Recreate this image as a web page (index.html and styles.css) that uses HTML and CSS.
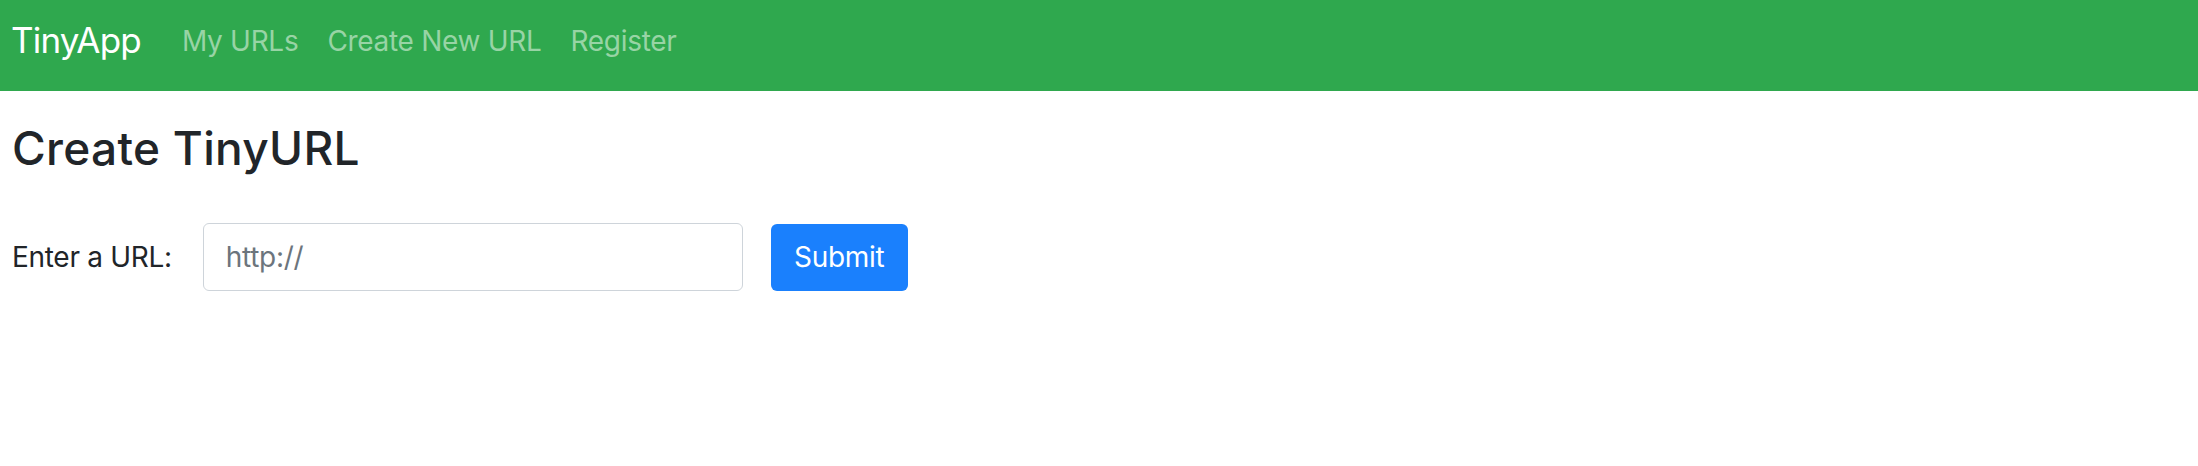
FILE: index.html
```html
<!DOCTYPE html>
<html lang="en">
<head>
<meta charset="utf-8">
<title>TinyApp</title>
<link rel="stylesheet" href="styles.css">
</head>
<body>
<nav class="navbar">
  <a class="brand" href="#">TinyApp</a>
  <ul class="nav-links">
    <li><a href="#">My URLs</a></li>
    <li><a href="#">Create New URL</a></li>
    <li><a href="#">Register</a></li>
  </ul>
</nav>
<main class="content">
  <h1 class="title">Create TinyURL</h1>
  <form class="url-form">
    <label class="url-label" for="longURL">Enter a URL:</label>
    <input class="url-input" id="longURL" type="text" placeholder="http://">
    <button class="btn-submit" type="submit">Submit</button>
  </form>
</main>
</body>
</html>
```

FILE: styles.css
```css
* { box-sizing: border-box; }
html, body { margin: 0; padding: 0; background: #ffffff; }
body {
  font-family: Inter, "Noto Sans", "Liberation Sans", sans-serif;
  color: #212529;
}
.navbar {
  height: 91px;
  background: #2fa84e;
  display: flex;
  align-items: flex-start;
  padding: 23px 11px 0 11px;
}
.brand {
  font-size: 35px;
  line-height: 35px;
  color: #ffffff;
  text-decoration: none;
  letter-spacing: -0.8px;
}
.nav-links {
  list-style: none;
  margin: 4px 0 0 41px;
  padding: 0;
  display: flex;
  gap: 29px;
}
.nav-links a {
  font-size: 28px;
  line-height: 28px;
  color: #98d4a5;
  text-decoration: none;
  letter-spacing: -0.3px;
  display: block;
}
.content {
  padding: 0 12px;
}
.title {
  margin: 30px 0 0 0;
  font-size: 46px;
  font-weight: 500;
  line-height: 54px;
  letter-spacing: 0.3px;
}
.url-form {
  display: flex;
  align-items: center;
  margin-top: 48px;
}
.url-label {
  font-size: 28px;
  margin-right: 31px;
  letter-spacing: -0.3px;
}
.url-input {
  width: 540px;
  height: 68px;
  border: 1px solid #ced4da;
  border-radius: 6px;
  padding: 0 22px;
  font-family: inherit;
  font-size: 28px;
  color: #495057;
  margin-right: 28px;
}
.url-input::placeholder {
  color: #6c757d;
  letter-spacing: -0.3px;
}
.btn-submit {
  width: 137px;
  height: 67px;
  border: none;
  border-radius: 6px;
  background: #1a80fd;
  color: #ffffff;
  font-family: inherit;
  font-size: 28px;
  letter-spacing: -0.3px;
  padding: 0;
}
```
